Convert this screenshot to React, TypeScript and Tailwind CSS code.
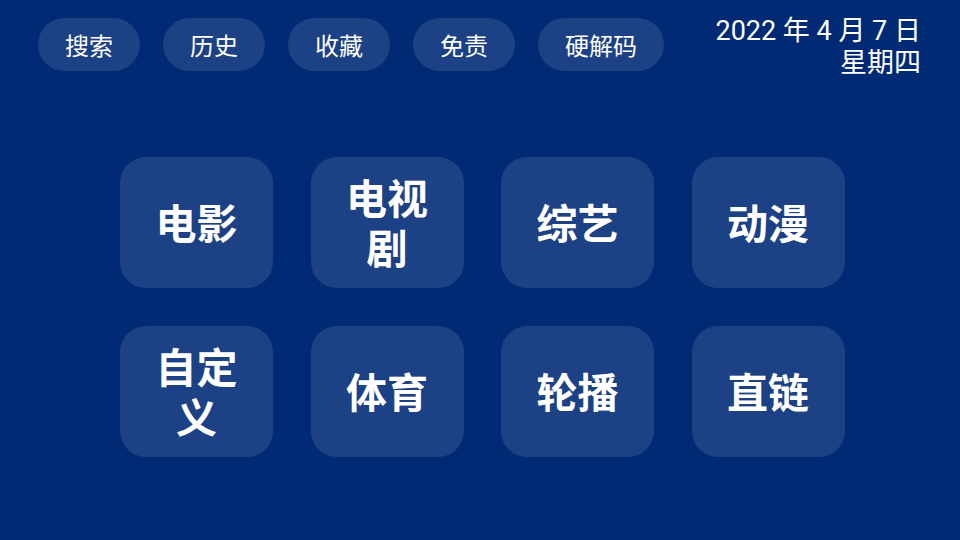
import React from "react";

const pills = ["搜索", "历史", "收藏", "免责", "硬解码"];
const tiles = [
  ["电影"],
  ["电视", "剧"],
  ["综艺"],
  ["动漫"],
  ["自定", "义"],
  ["体育"],
  ["轮播"],
  ["直链"],
];

export default function App() {
  return (
    <div
      className="w-[960px] h-[540px] bg-[#002a73] text-white overflow-hidden"
      style={{ fontFamily: '"Noto Sans CJK SC", "Noto Sans", sans-serif' }}
    >
      <div className="flex justify-between items-start h-[90px]">
        <div className="flex gap-[23px] pl-[38px] pt-[18px]">
          {pills.map((p) => (
            <div
              key={p}
              className="h-[53px] px-[27px] rounded-full bg-[#1d4185] flex items-center justify-center text-[24px] leading-none"
            >
              {p}
            </div>
          ))}
        </div>
        <div
          className="pr-[39px] pt-[15px] text-right text-[27px] leading-[32px]"
          style={{ fontFamily: 'Roboto, "Noto Sans CJK SC", sans-serif' }}
        >
          <div>2022 年 4 月 7 日</div>
          <div>星期四</div>
        </div>
      </div>
      <div className="pl-[120px] pt-[67px] grid grid-cols-[repeat(4,152px)] gap-x-[38.5px] gap-y-[38px]">
        {tiles.map((t) => (
          <div
            key={t.join("")}
            className="w-[153px] h-[131px] rounded-[26px] bg-[#1d4185] flex flex-col items-center justify-center font-bold text-[41px] leading-[50px] pb-[4px]"
          >
            {t.map((l) => (
              <div key={l}>{l}</div>
            ))}
          </div>
        ))}
      </div>
    </div>
  );
}
